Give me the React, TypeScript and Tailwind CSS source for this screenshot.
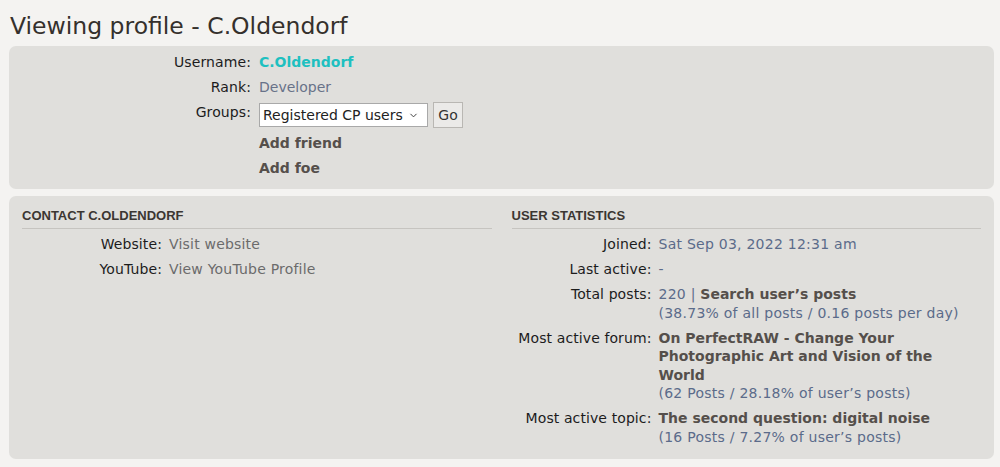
import { ChevronDown } from "lucide-react";

const font = "font-['DejaVu_Sans',Verdana,sans-serif]";

type Row = { label: string; value: React.ReactNode };

function DefList({ rows, labelW }: { rows: Row[]; labelW: string }) {
  return (
    <dl className="flex flex-col gap-y-[6.5px]">
      {rows.map((r) => (
        <div key={r.label} className="flex gap-[7px]">
          <dt className={`${labelW} shrink-0 text-right tracking-[0.1px] text-[#1c1c1c]`}>{r.label}:</dt>
          <dd className="min-w-0">{r.value}</dd>
        </div>
      ))}
    </dl>
  );
}

export default function App() {
  const link = "tracking-[0.2px] text-[#6b6b6b]";
  const blue = "tracking-[0.25px] text-[#5b6b8a]";
  const bold = "font-bold tracking-normal text-[#554f4b]";

  const contact: Row[] = [
    { label: "Website", value: <span className={link}>Visit website</span> },
    { label: "YouTube", value: <span className={link}>View YouTube Profile</span> },
  ];

  const stats: Row[] = [
    { label: "Joined", value: <span className={blue}>Sat Sep 03, 2022 12:31 am</span> },
    { label: "Last active", value: <span className={blue}>-</span> },
    {
      label: "Total posts",
      value: (
        <div className={blue}>
          220 | <span className={bold}>Search user’s posts</span>
          <br />
          (38.73% of all posts / 0.16 posts per day)
        </div>
      ),
    },
    {
      label: "Most active forum",
      value: (
        <div className="max-w-[312px]">
          <div className={bold}>On PerfectRAW - Change Your Photographic Art and Vision of the World</div>
          <div className={blue}>(62 Posts / 28.18% of user’s posts)</div>
        </div>
      ),
    },
    {
      label: "Most active topic",
      value: (
        <div>
          <div className={bold}>The second question: digital noise</div>
          <div className={blue}>(16 Posts / 7.27% of user’s posts)</div>
        </div>
      ),
    },
  ];

  return (
    <div className={`${font} min-h-[467px] bg-[#f4f3f1] pl-[9px] pr-[6px] text-[14px] leading-[18.5px]`}>
      <h2 className="h-[46px] pl-px pt-[11px] text-[23.5px] leading-[30px] text-[#35302c]">
        Viewing profile - C.Oldendorf
      </h2>

      <div className="h-[143px] rounded-[7px] bg-[#e0dfdc] pt-[7px] leading-[18px]">
        <dl className="flex flex-col gap-y-[7px]">
          <div className="flex gap-[8px]">
            <dt className="w-[242px] shrink-0 text-right tracking-[0.1px] text-[#1c1c1c]">Username:</dt>
            <dd className="font-bold text-[#1ec0c0]">C.Oldendorf</dd>
          </div>
          <div className="flex gap-[8px]">
            <dt className="w-[242px] shrink-0 text-right tracking-[0.1px] text-[#1c1c1c]">Rank:</dt>
            <dd className="text-[#687289]">Developer</dd>
          </div>
          <div className="flex gap-[8px]">
            <dt className="w-[242px] shrink-0 text-right tracking-[0.1px] text-[#1c1c1c]">Groups:</dt>
            <dd className="flex h-[24px] items-start gap-[5px]">
              <div className="flex h-[24px] w-[169px] items-center justify-between border border-[#a9a9a9] bg-white pl-[3px] pr-[8px] text-[#222]">
                <span>Registered CP users</span>
                <ChevronDown size={11} strokeWidth={2} className="text-[#333]" />
              </div>
              <div className="-mt-px flex h-[26px] w-[30px] items-center justify-center border border-[#b9b7b3] bg-[#ebeae8] text-[#333]">
                Go
              </div>
            </dd>
          </div>
          <div className="flex gap-[8px]">
            <dt className="w-[242px] shrink-0" />
            <dd className={bold}>Add friend</dd>
          </div>
          <div className="flex gap-[8px]">
            <dt className="w-[242px] shrink-0" />
            <dd className={bold}>Add foe</dd>
          </div>
        </dl>
      </div>

      <div className="mt-[7px] grid grid-cols-2 gap-[20px] rounded-[7px] bg-[#e0dfdc] px-[13px] pt-[12px] pb-[13px]">
        <section>
          <h3 className="mb-[6px] border-b border-[#c6c4c0] pb-[4px] font-['Liberation_Sans',Arial,sans-serif] text-[13px] font-bold uppercase leading-[16px] text-[#3b3632]">
            Contact C.Oldendorf
          </h3>
          <DefList rows={contact} labelW="w-[140px]" />
        </section>
        <section>
          <h3 className="mb-[6px] border-b border-[#c6c4c0] pb-[4px] font-['Liberation_Sans',Arial,sans-serif] text-[13px] font-bold uppercase leading-[16px] text-[#3b3632]">
            User statistics
          </h3>
          <DefList rows={stats} labelW="w-[140px]" />
        </section>
      </div>
    </div>
  );
}
